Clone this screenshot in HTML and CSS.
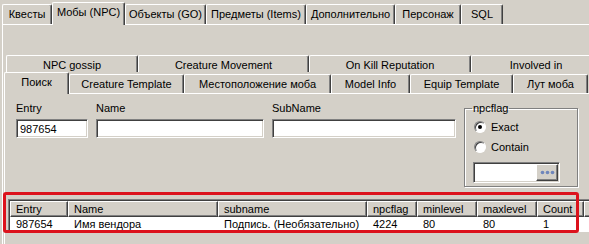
FILE: index.html
```html
<!DOCTYPE html>
<html>
<head>
<meta charset="utf-8">
<link rel="stylesheet" href="styles.css">
</head>
<body>
<div class="tabs top">
  <div class="tab t1">Квесты</div>
  <div class="tab t2 sel">Мобы (NPC)</div>
  <div class="tab t3">Объекты (GO)</div>
  <div class="tab t4">Предметы (Items)</div>
  <div class="tab t5">Дополнительно</div>
  <div class="tab t6">Персонаж</div>
  <div class="tab t7">SQL</div>
</div>
<div class="page">
  <div class="subtabs">
    <div class="row back">
      <div class="stab b1">NPC gossip</div>
      <div class="stab b2">Creature Movement</div>
      <div class="stab b3">On Kill Reputation</div>
      <div class="stab b4">Involved in</div>
    </div>
    <div class="row front">
      <div class="stab f1 sel">Поиск</div>
      <div class="stab f2">Creature Template</div>
      <div class="stab f3">Местоположение моба</div>
      <div class="stab f4">Model Info</div>
      <div class="stab f5">Equip Template</div>
      <div class="stab f6">Лут моба</div>
    </div>
  </div>
  <div class="subpage">
    <div class="form">
      <div class="field entry">
        <label>Entry</label>
        <div class="input">987654</div>
      </div>
      <div class="field name">
        <label>Name</label>
        <div class="input"></div>
      </div>
      <div class="field subname">
        <label>SubName</label>
        <div class="input"></div>
      </div>
      <fieldset class="group">
        <legend>npcflag</legend>
        <div class="radio on"><span class="dot"></span>Exact</div>
        <div class="radio"><span class="dot"></span>Contain</div>
        <div class="input flag">
          <span class="btn"><svg width="15" height="5" viewBox="0 0 15 5"><circle cx="2.5" cy="2.5" r="1.8" fill="#6f86bb"/><circle cx="7.5" cy="2.5" r="1.8" fill="#6f86bb"/><circle cx="12.5" cy="2.5" r="1.8" fill="#6f86bb"/></svg></span>
        </div>
      </fieldset>
    </div>
    <div class="list">
      <div class="lrow head">
        <div class="c c1">Entry</div>
        <div class="c c2">Name</div>
        <div class="c c3">subname</div>
        <div class="c c4">npcflag</div>
        <div class="c c5">minlevel</div>
        <div class="c c6">maxlevel</div>
        <div class="c c7">Count</div>
        <div class="c c8"></div>
      </div>
      <div class="lrow data">
        <div class="c c1">987654</div>
        <div class="c c2">Имя вендора</div>
        <div class="c c3">Подпись. (Необязательно)</div>
        <div class="c c4">4224</div>
        <div class="c c5">80</div>
        <div class="c c6">80</div>
        <div class="c c7">1</div>
        <div class="c c8"></div>
      </div>
    </div>
  </div>
</div>
<div class="redbox"></div>
</body>
</html>
```
FILE: styles.css
```css
* { box-sizing: border-box; margin: 0; padding: 0; }
html, body { width: 589px; height: 244px; overflow: hidden; }
body {
  background: #d4d0c8;
  font-family: "Liberation Sans", Arial, sans-serif;
  font-size: 11px;
  color: #000;
  position: relative;
}

/* top tabs */
.tabs { display: flex; align-items: flex-end; height: 24px; padding-left: 2px; }
.tab {
  height: 20px;
  display: flex; align-items: center; justify-content: center;
  border-top: 1px solid #fff;
  border-left: 1px solid #fff;
  border-right: 1px solid #404040;
  box-shadow: inset -1px 0 #808080;
  border-top-left-radius: 2px;
  border-top-right-radius: 2px;
  white-space: nowrap;
  background: #d4d0c8;
  padding-bottom: 1px;
}
.tab.sel { height: 23px; margin-bottom: -1px; position: relative; z-index: 1; padding-bottom: 4px; }
.t1 { width: 50px; }
.t2 { width: 73px; }
.t3 { width: 81px; }
.t4 { width: 100px; }
.t5 { width: 89px; }
.t6 { width: 66px; }
.t7 { width: 42px; }

/* page */
.page {
  margin-left: 2px;
  border-top: 1px solid #fff;
  border-left: 1px solid #fff;
  height: 220px;
  padding-top: 30px;
}

.row { display: flex; align-items: flex-end; white-space: nowrap; }
.row.back { padding-left: 3px; height: 17px; }
.row.front { padding-left: 1px; height: 21px; }
.stab {
  display: flex; align-items: center; justify-content: center;
  border-top: 1px solid #fff;
  border-left: 1px solid #fff;
  border-right: 1px solid #404040;
  box-shadow: inset -1px 0 #808080;
  border-top-left-radius: 2px;
  border-top-right-radius: 2px;
  background: #d4d0c8;
  flex: none;
}
.back .stab { height: 17px; padding-top: 1px; }
.front .stab { height: 19px; }
.front .stab.sel { height: 22px; margin-bottom: -1px; position: relative; z-index: 1; padding-bottom: 3px; }
.b1 { width: 132px; }
.b2 { width: 171px; }
.b3 { width: 162px; }
.b4 { width: 130px; }
.f1 { width: 65px; }
.f2 { width: 115px; }
.f3 { width: 147px; }
.f4 { width: 79px; }
.f5 { width: 103px; }
.f6 { width: 75px; }

.subpage {
  margin-left: 1px;
  border-top: 1px solid #fff;
  border-left: 1px solid #fff;
  height: 160px;
}

.form { display: flex; align-items: flex-start; padding: 8px 0 0 11px; gap: 8px; }
.field label { display: block; height: 13px; line-height: 13px; margin-bottom: 4px; }
.input {
  height: 19px;
  background: #fff;
  border-top: 1px solid #808080;
  border-left: 1px solid #808080;
  border-right: 1px solid #fff;
  border-bottom: 1px solid #fff;
  box-shadow: inset 1px 1px #404040, inset -1px -1px #d4d0c8;
  padding: 3px 0 0 3px;
  line-height: 12px;
}
.entry .input { width: 72px; }
.name .input { width: 168px; }
.subname .input { width: 184px; }

.group {
  width: 114px;
  height: 85px;
  border: 1px solid #808080;
  box-shadow: 1px 1px #fff, inset 1px 1px #fff;
  padding: 0 0 0 8px;
}
.group legend { padding: 0 1px; margin-left: -1px; line-height: 13px; }
.radio { height: 20px; display: flex; align-items: center; margin-top: 0; }
.radio:first-of-type { margin-top: 2px; }
.dot {
  width: 12px; height: 12px; border-radius: 50%;
  background: #fff;
  border: 1px solid #808080;
  border-right-color: #fff; border-bottom-color: #fff;
  box-shadow: inset 1px 1px #404040;
  margin: 0 5px 0 1px;
  position: relative;
}
.radio.on .dot::after {
  content: ""; position: absolute; left: 3px; top: 3px;
  width: 4px; height: 4px; border-radius: 50%; background: #000;
}
.input.flag {
  width: 87px; height: 21px; margin-top: 5px;
  display: flex; justify-content: flex-end; padding: 1px;
}
.btn {
  width: 22px; height: 17px;
  background: #d4d0c8;
  border-top: 1px solid #fff; border-left: 1px solid #fff;
  border-right: 1px solid #404040; border-bottom: 1px solid #404040;
  box-shadow: inset -1px -1px #808080;
  display: flex; align-items: center; justify-content: center;
}

/* list */
.list {
  margin: 12px 0 0 3px;
  width: 600px;
  height: 33px;
  border-top: 1px solid #808080;
  border-left: 1px solid #808080;
  box-shadow: inset 1px 1px #404040;
  padding: 1px 0 0 1px;
  background: #fff;
  overflow: hidden;
}
.lrow { display: flex; white-space: nowrap; }
.lrow .c { flex: none; padding-left: 5px; overflow: hidden; }
.head .c {
  height: 16px; line-height: 14px;
  background: #d4d0c8;
  border-top: 1px solid #fff; border-left: 1px solid #fff;
  border-right: 1px solid #404040; border-bottom: 1px solid #404040;
  box-shadow: inset -1px -1px #808080;
}
.data .c { height: 15px; line-height: 15px; padding-left: 6px; }
.c1 { width: 58px; }
.c2 { width: 150px; }
.c3 { width: 149px; }
.c4 { width: 50px; }
.c5 { width: 60px; }
.c6 { width: 60px; }
.c7 { width: 47px; }
.c8 { width: 60px; }

.redbox {
  position: absolute;
  left: 3px; top: 192px;
  width: 576px; height: 41px;
  border: 3px solid #dc121c;
  border-radius: 3px;
}
```
